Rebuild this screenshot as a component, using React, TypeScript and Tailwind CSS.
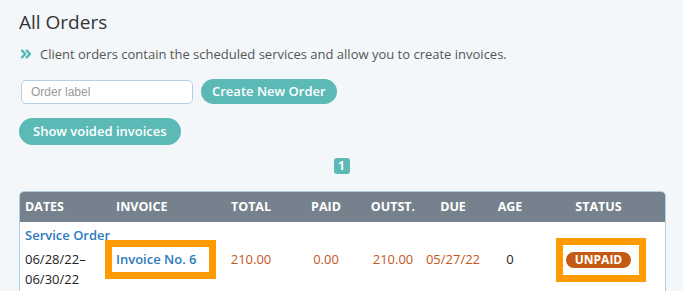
import { ChevronsRight } from 'lucide-react';

export default function App() {
  const order = {
    title: 'Service Order',
    from: '06/28/22–',
    to: '06/30/22',
    invoice: 'Invoice No. 6',
    total: '210.00',
    paid: '0.00',
    outstanding: '210.00',
    due: '05/27/22',
    age: '0',
    status: 'UNPAID',
  };

  return (
    <div className="min-h-screen bg-[#f3f7fa] px-[19px] pt-[8px] font-['Open_Sans',sans-serif] text-[#333]">
      {/* Header */}
      <h1 className="text-[19px] leading-[28px] text-[#333]">All Orders</h1>
      <p className="mt-[8px] flex items-center gap-[6px] text-[13px] leading-[20px] text-[#555]">
        <ChevronsRight size={16} strokeWidth={3.4} className="text-[#4fb5b1] ml-[-1px]" />
        Client orders contain the scheduled services and allow you to create invoices.
      </p>

      {/* Actions */}
      <div className="mt-[15px] flex items-center gap-[8px]">
        <input
          placeholder="Order label"
          className="ml-[2px] h-[24px] w-[172px] rounded-[5px] border border-[#b5d0e6] bg-white px-[9px] font-['Liberation_Sans',sans-serif] text-[12px] placeholder:text-[#9a9a9a] outline-none"
        />
        <button className="h-[25px] rounded-full bg-[#5cbab6] px-[11px] text-[13px] font-semibold text-white">
          Create New Order
        </button>
      </div>
      <button className="mt-[14px] h-[27px] rounded-full bg-[#5cbab6] px-[14px] text-[13px] font-semibold text-white">
        Show voided invoices
      </button>

      {/* Pagination */}
      <div className="mt-[13px] flex justify-center">
        <span className="flex h-[16px] w-[16px] items-center justify-center rounded-[3px] bg-[#5cbab6] text-[12px] font-bold text-white">
          1
        </span>
      </div>

      {/* Orders table */}
      <div className="mt-[17px] w-[647px] overflow-hidden rounded-t-[5px] border border-[#aecde3] bg-white">
        <table className="w-full table-fixed border-collapse">
          <colgroup>
            <col className="w-[90px]" />
            <col className="w-[112px]" />
            <col className="w-[62px]" />
            <col className="w-[84px]" />
            <col className="w-[50px]" />
            <col className="w-[70px]" />
            <col className="w-[44px]" />
            <col className="w-[133px]" />
          </colgroup>
          <thead>
            <tr className="h-[30px] bg-[#75818c] text-[12.5px] font-bold text-white">
              <th className="pl-[5px] text-left">DATES</th>
              <th className="pl-[6px] text-left">INVOICE</th>
              <th className="pr-[4px] text-center">TOTAL</th>
              <th className="text-center">PAID</th>
              <th className="text-center">OUTST.</th>
              <th className="text-center">DUE</th>
              <th className="text-center">AGE</th>
              <th className="text-center">STATUS</th>
            </tr>
          </thead>
          <tbody className="text-[13px] leading-[20px]">
            <tr>
              <td className="pl-[5px] pt-[3px] pb-[6px] align-top whitespace-nowrap">
                <a className="block mb-[4px] font-semibold text-[#2a7bbd]">{order.title}</a>
                <div className="text-[#222]">{order.from}</div>
                <div className="text-[#222]">{order.to}</div>
              </td>
              <td className="pl-[6px] align-middle whitespace-nowrap">
                <span className="relative inline-block font-semibold text-[#2a7bbd]">
                  {order.invoice}
                  <span className="absolute -left-[11px] -right-[19px] -top-[9px] -bottom-[10px] border-[7px] border-[#ff9a00]" />
                </span>
              </td>
              <td className="pr-[4px] text-center text-[#c5561c]">{order.total}</td>
              <td className="text-center text-[#c5561c]">{order.paid}</td>
              <td className="text-center text-[#c5561c]">{order.outstanding}</td>
              <td className="text-center text-[#c5561c]">{order.due}</td>
              <td className="text-center text-[#222]">{order.age}</td>
              <td className="text-center">
                <span className="relative inline-block rounded-full bg-[#c55a12] px-[9px] text-[12px] font-bold leading-[16px] text-white">
                  {order.status}
                  <span className="absolute -left-[10px] -right-[15px] -top-[14px] -bottom-[14px] border-[7px] border-[#ff9a00]" />
                </span>
              </td>
            </tr>
          </tbody>
        </table>
      </div>
    </div>
  );
}
